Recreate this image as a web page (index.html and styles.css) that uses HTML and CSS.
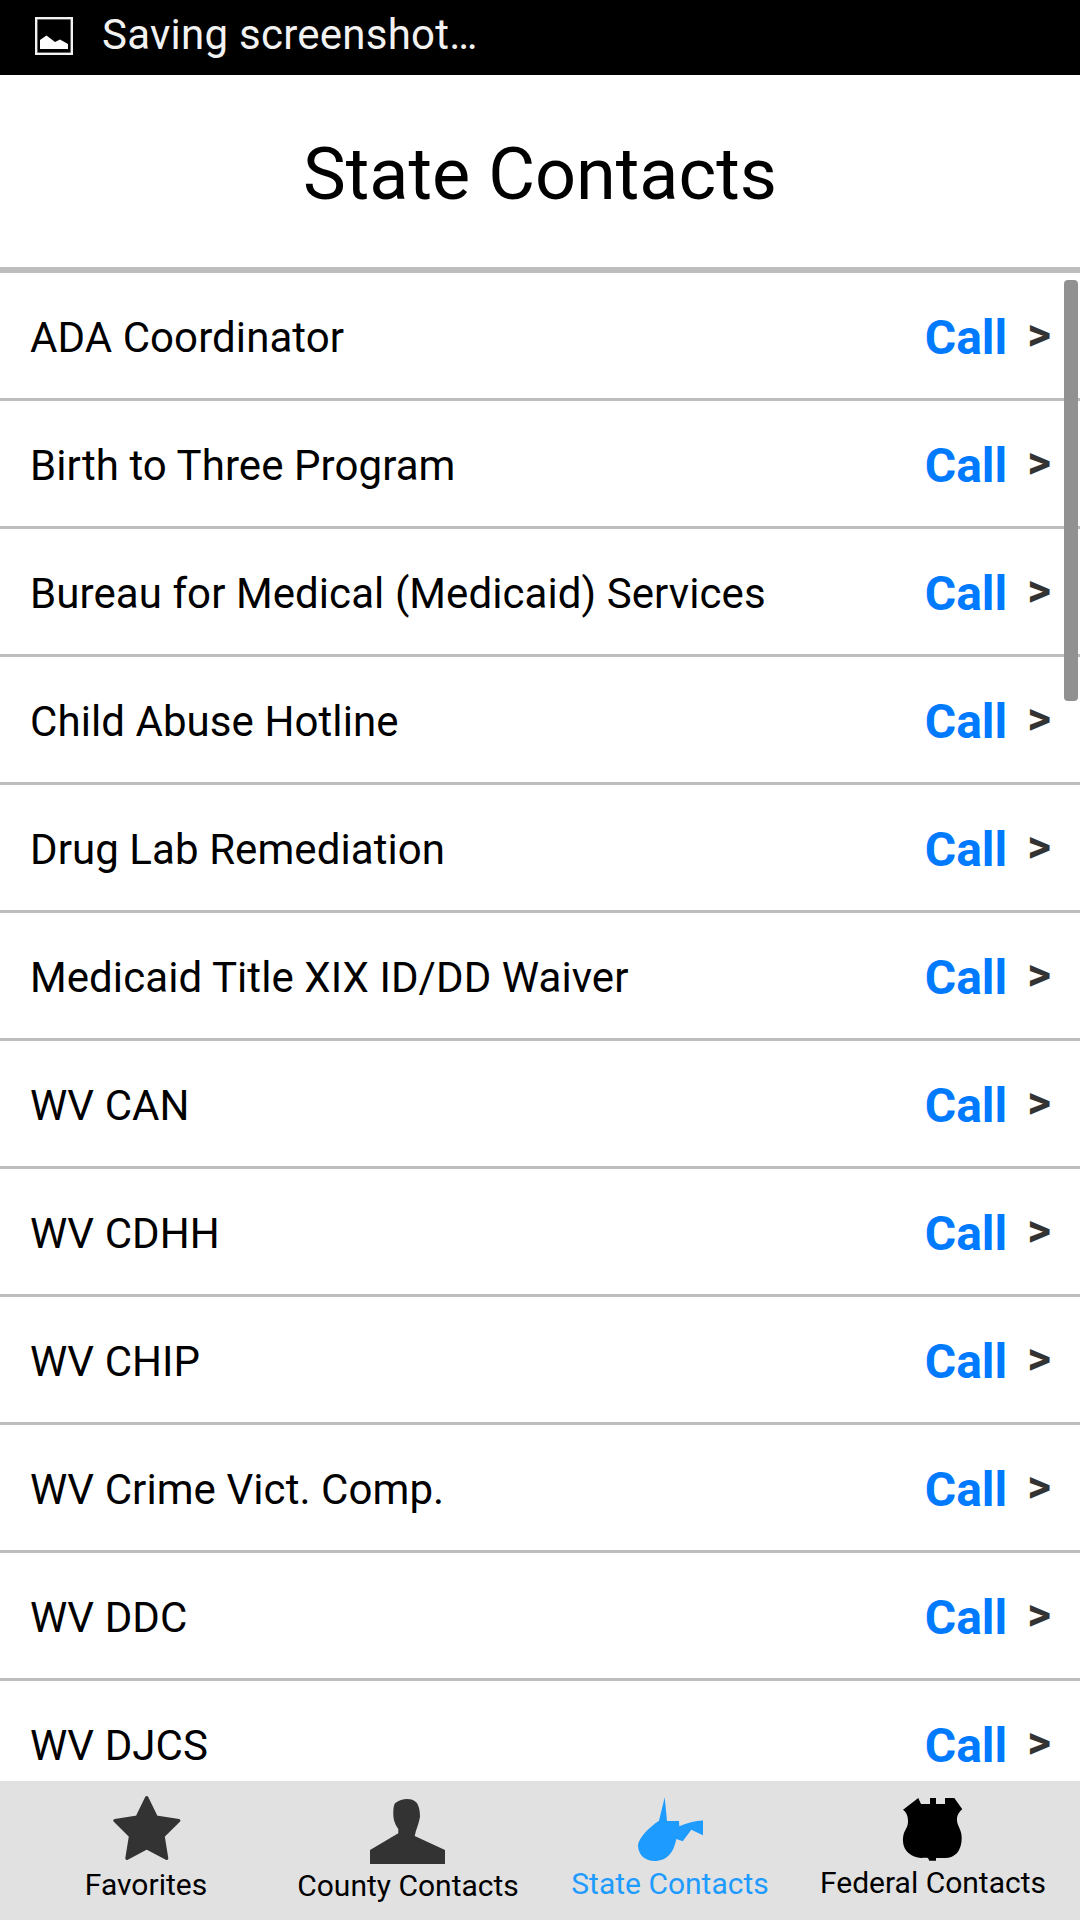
FILE: index.html
```
<!DOCTYPE html>
<html lang="en">
<head>
  <meta charset="UTF-8">
  <meta name="viewport" content="width=device-width, initial-scale=1.0">
  <title>State Contacts</title>
  <link rel="stylesheet" href="styles.css">
</head>
<body>
  <div class="status-bar">
    <svg class="status-icon" width="38" height="38" viewBox="0 0 38 38">
      <rect x="1.2" y="1.2" width="35.6" height="35.6" fill="none" stroke="#f2f2f2" stroke-width="2.4"/>
      <path d="M5 32V23L11.5 18.5L20 25L25 22.5L33 27V32Z" fill="#fff"/>
    </svg>
    <span class="status-text">Saving screenshot…</span>
  </div>

  <header>
    <h1>State Contacts</h1>
  </header>

  <main>
    <ul class="contacts">
      <li><span class="name">ADA Coordinator</span><a class="call">Call</a><span class="arrow">&gt;</span></li>
      <li><span class="name">Birth to Three Program</span><a class="call">Call</a><span class="arrow">&gt;</span></li>
      <li><span class="name">Bureau for Medical (Medicaid) Services</span><a class="call">Call</a><span class="arrow">&gt;</span></li>
      <li><span class="name">Child Abuse Hotline</span><a class="call">Call</a><span class="arrow">&gt;</span></li>
      <li><span class="name">Drug Lab Remediation</span><a class="call">Call</a><span class="arrow">&gt;</span></li>
      <li><span class="name">Medicaid Title XIX ID/DD Waiver</span><a class="call">Call</a><span class="arrow">&gt;</span></li>
      <li><span class="name">WV CAN</span><a class="call">Call</a><span class="arrow">&gt;</span></li>
      <li><span class="name">WV CDHH</span><a class="call">Call</a><span class="arrow">&gt;</span></li>
      <li><span class="name">WV CHIP</span><a class="call">Call</a><span class="arrow">&gt;</span></li>
      <li><span class="name">WV Crime Vict. Comp.</span><a class="call">Call</a><span class="arrow">&gt;</span></li>
      <li><span class="name">WV DDC</span><a class="call">Call</a><span class="arrow">&gt;</span></li>
      <li><span class="name">WV DJCS</span><a class="call">Call</a><span class="arrow">&gt;</span></li>
    </ul>
    <div class="scrollbar"></div>
  </main>

  <nav class="tabs">
    <a class="tab favorites">
      <svg width="90" height="68" viewBox="0 0 90 68">
        <path d="M45.7 1.8L55.2 21.3L77.7 24.6L62 40L65.6 62.3L45.7 51.8L26 62.3L29.6 40L14 24.6L36.2 21.3Z" fill="#333" stroke="#333" stroke-width="3.4" stroke-linejoin="round"/>
      </svg>
      <span>Favorites</span>
    </a>
    <a class="tab county">
      <svg width="90" height="68" viewBox="0 0 90 68">
        <path d="M32 7.3C36 4 40 3 44 3C48 3 51 4 53.7 6.7C56 10 57 15 57 20.7C56 28 53 33 51.7 40L82 54V68H7V54L35.3 37.3V33C31 27 30.3 22 30.3 17C30.3 12 31 9 32 7.3Z" fill="#333"/>
      </svg>
      <span>County Contacts</span>
    </a>
    <a class="tab state active">
      <svg width="90" height="68" viewBox="0 0 90 68">
        <path d="M39.7 1.2L42 25H54L54.3 30.3C62 27 70 24.5 78 24.5V39.3L66.3 33.7L57.7 45.3L51.3 43C50 49 48 55 45 58C41 63 35 65 30 65C19 65 13 58 13 49C14 42 23 32 34 24.7Z" fill="#1e9bff"/>
      </svg>
      <span>State Contacts</span>
    </a>
    <a class="tab federal">
      <svg width="90" height="68" viewBox="0 0 90 68">
        <path d="M16 13.7L31.3 2L34 8H43V2H49V8H58V2H67.3L75.3 13.3C71 17 70 20 70 24C70 30 74.7 33 74.7 42C74.7 55 68 62 58 62H49V64.7H42.3L41 62C37 61.5 34 62.5 29.7 61.3C21 59 16 52 16 45C16 33 21 34 21 25C21 20 19.5 16 16 13.7Z" fill="#000"/>
      </svg>
      <span>Federal Contacts</span>
    </a>
  </nav>
</body>
</html>
```
FILE: styles.css
```
:root {
  --line: #bdbdbd;
  --call: #007aff;
  --active: #1e9bff;
  --tabs: #e1e1e1;
}
* { margin: 0; padding: 0; box-sizing: border-box; }
body {
  background: #fff;
  color: #000;
  font-family: Roboto, sans-serif;
  display: flex;
  flex-direction: column;
  height: 1920px;
  overflow: hidden;
}
.status-bar {
  display: flex;
  align-items: center;
  flex-shrink: 0;
  height: 75px;
  padding: 0 35px 5px;
  background: #000;
  color: #f2f2f2;
}
.status-icon { margin-top: 2px; }
.status-text {
  margin: 0 0 2px 29px;
  font-size: 42px;
  letter-spacing: 0.25px;
}
header {
  display: flex;
  align-items: center;
  justify-content: center;
  flex-shrink: 0;
  height: 198px;
  padding-top: 7px;
  border-bottom: 6px solid var(--line);
}
h1 { font-size: 72px; font-weight: 400; }
main {
  position: relative;
  flex: 1;
  min-height: 0;
  overflow: hidden;
}
.contacts { list-style: none; }
.contacts li {
  display: flex;
  align-items: center;
  height: 128px;
  padding: 4px 29px 0 30px;
  border-bottom: 3px solid var(--line);
}
.name {
  flex: 1;
  font-size: 42px;
  letter-spacing: 0.08px;
}
.call {
  color: var(--call);
  font-size: 48px;
  font-weight: 700;
}
.arrow {
  margin: 0 0 7px 20px;
  color: #333;
  font-size: 46px;
  font-weight: 700;
}
/* floats over the list */
.scrollbar {
  position: absolute;
  top: 7px;
  right: 2px;
  width: 14px;
  height: 421px;
  border-radius: 4px;
  background: #919191;
}
.tabs {
  display: grid;
  grid-template-columns: repeat(4, 262px);
  flex-shrink: 0;
  height: 139px;
  padding: 15px 15px 0;
  background: var(--tabs);
}
.tab {
  display: flex;
  flex-direction: column;
  align-items: center;
  font-size: 30px;
  line-height: 36px;
}
.tab span { margin-top: 3px; }
.county span { margin-top: 4px; }
.state span { margin-top: 2px; }
.federal span { margin: 1px 0 0 2px; }
.active { color: var(--active); }
```
